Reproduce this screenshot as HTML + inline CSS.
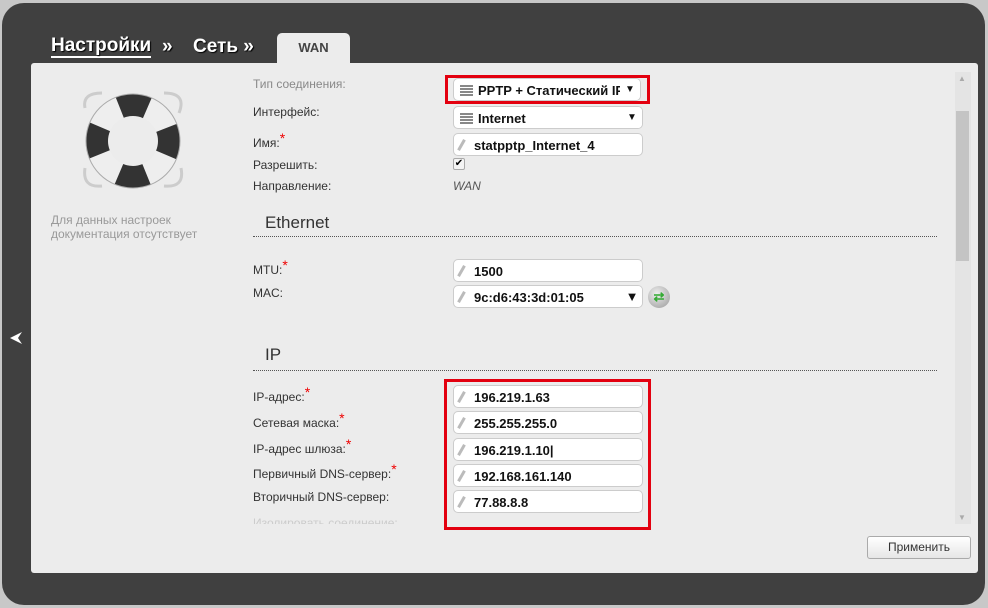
<!DOCTYPE html>
<html><head><meta charset="utf-8"><style>
*{box-sizing:border-box;margin:0;padding:0}
body{width:988px;height:608px;background:#c8c8c8;font-family:"Liberation Sans",sans-serif;position:relative;overflow:hidden}
.frame{position:absolute;left:2px;top:3px;width:983px;height:602px;background:#404040;border-radius:22px}
.panel{position:absolute;left:31px;top:63px;width:947px;height:510px;background:#ececec;border-radius:3px;overflow:hidden}
.bc{position:absolute;top:36px;font-size:19px;font-weight:bold;color:#fff;text-shadow:1px 1px 1px #000}
.tab{position:absolute;left:277px;top:33px;width:73px;height:32px;background:#ececec;border-radius:5px 5px 0 0;font-size:13px;font-weight:bold;color:#444;text-align:center;padding-top:7px}
.lbl{position:absolute;left:253px;font-size:12px;color:#333}
.st{color:#e00;font-size:14px;position:relative;top:-4px}
.inp{position:absolute;left:453px;width:190px;height:23px;background:#fff;border:1px solid #ccc;border-radius:5px;font-size:13px;font-weight:bold;color:#111;padding:4px 0 0 20px;white-space:nowrap;overflow:hidden}
.inp:before{content:"";position:absolute;left:6px;top:5px;width:3px;height:12px;background:#bbb;transform:rotate(30deg)}
.sel:before{display:none}
.sel .ic{position:absolute;left:6px;top:6px;width:13px;height:11px;background:repeating-linear-gradient(#888 0 2px,transparent 2px 3px)}
.sel{padding-left:24px}
.arr{position:absolute;right:0;top:0;width:20px;height:21px;background:#fff;font-size:10px;text-align:center;line-height:21px}
h2{position:absolute;left:265px;font-size:17px;font-weight:normal;color:#333}
.dl{position:absolute;left:253px;width:684px;border-top:1px dotted #555}
.red{position:absolute;border:3px solid #e3000f}
</style></head><body>
<div class="frame"></div>
<div class="bc" style="left:51px;border-bottom:2px solid #fff;line-height:20px">Настройки</div>
<div class="bc" style="left:162px">»</div>
<div class="bc" style="left:193px">Сеть »</div>
<div class="tab">WAN</div>
<div class="panel"></div>
<svg style="position:absolute;left:77px;top:88px" width="112" height="104" viewBox="0 0 112 104">
<path d="M8 20 Q5 5 25 5 M87 5 Q110 5 102 25 M8 80 Q5 100 25 98 M87 98 Q108 100 104 80" stroke="#ccc" stroke-width="3" fill="none"/>
<circle cx="56" cy="53" r="36" fill="none" stroke="#eee" stroke-width="22"/>
<circle cx="56" cy="53" r="36" fill="none" stroke="#333" stroke-width="22" stroke-dasharray="28.3 28.3" stroke-dashoffset="14"/>
<circle cx="56" cy="53" r="47" fill="none" stroke="#aaa" stroke-width="1"/>
</svg>
<div style="position:absolute;left:51px;top:213px;font-size:12px;color:#999;line-height:14px">Для данных настроек<br>документация отсутствует</div>
<div style="position:absolute;left:955px;top:72px;width:16px;height:452px;background:#e4e4e4"></div>
<div style="position:absolute;left:956px;top:111px;width:13px;height:150px;background:#c4c4c4"></div>
<div style="position:absolute;left:958px;top:74px;font-size:8px;color:#aaa">▲</div>
<div style="position:absolute;left:958px;top:513px;font-size:8px;color:#aaa">▼</div>
<svg style="position:absolute;left:9px;top:331px" width="14" height="14" viewBox="0 0 14 14"><path d="M13 1 L1 7 L13 13 L9 7 Z" fill="#fff"/></svg>

<div class="lbl" style="top:77px;color:#888">Тип соединения:</div>
<div class="lbl" style="top:105px">Интерфейс:</div>
<div class="lbl" style="top:134px">Имя:<span class="st">*</span></div>
<div class="lbl" style="top:158px">Разрешить:</div>
<div class="lbl" style="top:179px">Направление:</div>
<div class="inp sel" style="top:78px;width:188px"><span class="ic"></span>PPTP + Статический IP<span class="arr">▼</span></div>
<div class="inp sel" style="top:106px"><span class="ic"></span>Internet<span class="arr">▼</span></div>
<div class="inp" style="top:133px">statpptp_Internet_4</div>
<div style="position:absolute;left:453px;top:158px;width:12px;height:12px;border:1px solid #aaa;border-radius:2px;background:#f4f4f4;font-size:10px;line-height:10px;text-align:center">✔</div>
<div style="position:absolute;left:453px;top:179px;font-size:12px;font-style:italic;color:#555">WAN</div>
<div class="red" style="left:445px;top:75px;width:205px;height:29px"></div>

<h2 style="top:213px">Ethernet</h2>
<div class="dl" style="top:236px"></div>
<div class="lbl" style="top:261px">MTU:<span class="st">*</span></div>
<div class="lbl" style="top:286px">MAC:</div>
<div class="inp" style="top:259px">1500</div>
<div class="inp" style="top:285px">9c:d6:43:3d:01:05<span class="arr" style="font-size:13px">▼</span></div>
<div style="position:absolute;left:648px;top:286px;width:22px;height:22px;border-radius:50%;background:radial-gradient(circle at 40% 35%,#eee,#999);color:#3a3;font-size:13px;text-align:center;line-height:22px;font-weight:bold">⇄</div>

<h2 style="top:345px">IP</h2>
<div class="dl" style="top:370px"></div>
<div class="lbl" style="top:388px">IP-адрес:<span class="st">*</span></div>
<div class="lbl" style="top:414px">Сетевая маска:<span class="st">*</span></div>
<div class="lbl" style="top:440px">IP-адрес шлюза:<span class="st">*</span></div>
<div class="lbl" style="top:465px">Первичный DNS-сервер:<span class="st">*</span></div>
<div class="lbl" style="top:490px">Вторичный DNS-сервер:</div>
<div class="lbl" style="top:516px;color:#ccc">Изолировать соединение:</div>
<div class="inp" style="top:385px">196.219.1.63</div>
<div class="inp" style="top:411px">255.255.255.0</div>
<div class="inp" style="top:438px">196.219.1.10|</div>
<div class="inp" style="top:464px">192.168.161.140</div>
<div class="inp" style="top:490px">77.88.8.8</div>
<div style="position:absolute;left:31px;top:524px;width:920px;height:8px;background:#ececec"></div>
<div class="red" style="left:444px;top:379px;width:207px;height:151px"></div>

<div style="position:absolute;left:867px;top:536px;width:104px;height:23px;border:1px solid #aaa;border-radius:3px;background:linear-gradient(#fff,#e6e6e6);font-size:12px;text-align:center;line-height:21px;color:#333">Применить</div>
</body></html>
